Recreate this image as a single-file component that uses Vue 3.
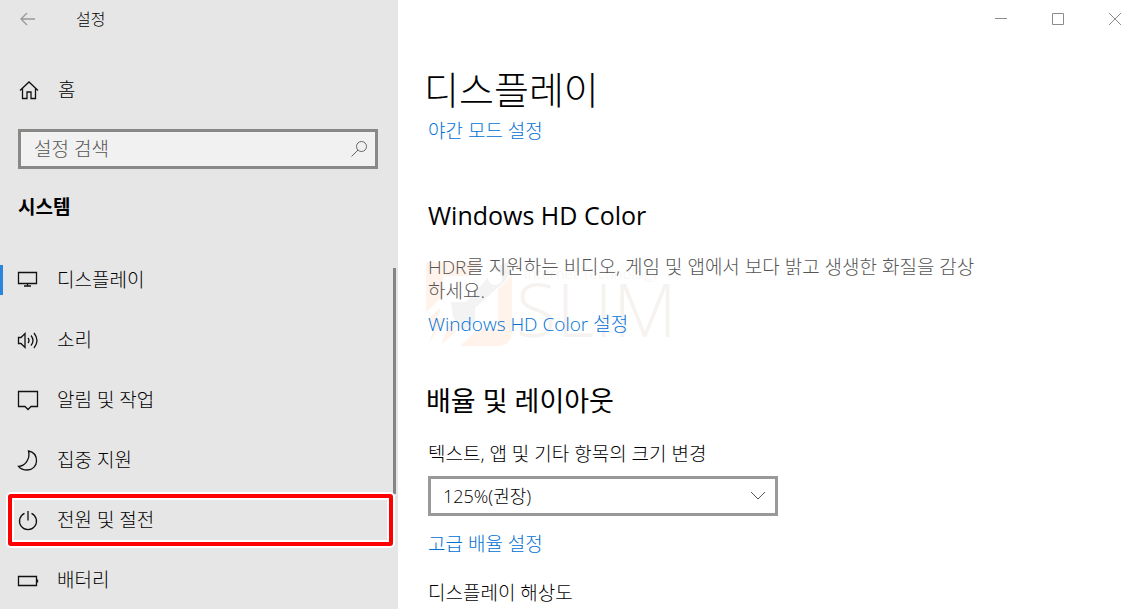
<script setup>
import { ref } from 'vue'

const query = ref('')
const scale = ref('125')
const items = [
  { id: 'display', label: '디스플레이', active: true },
  { id: 'sound', label: '소리' },
  { id: 'alerts', label: '알림 및 작업' },
  { id: 'focus', label: '집중 지원' },
  { id: 'power', label: '전원 및 절전', marked: true },
  { id: 'battery', label: '배터리' },
]
</script>

<template>
  <div class="window">
    <aside class="sidebar">
      <header class="titlebar">
        <button class="back" type="button" aria-label="뒤로">
          <svg width="16" height="14" viewBox="0 0 16 14"><path d="M15 7H1M7 1L1 7l6 6" /></svg>
        </button>
        <span class="app-name">설정</span>
      </header>

      <a class="home" href="#home">
        <svg class="icon" width="20" height="20" viewBox="0 0 20 20">
          <path d="M1 10.500L10 2l9 8.500M3.500 8.500V18.500H8V12h4v6.500h4.500V8.500" />
        </svg>
        <span>홈</span>
      </a>

      <div class="search">
        <input v-model="query" type="text" placeholder="설정 검색" aria-label="설정 검색" />
        <button type="button" aria-label="검색">
          <svg width="18" height="18" viewBox="0 0 18 18">
            <circle cx="11.500" cy="6.500" r="5" /><path d="M8 10L1.500 16.500" />
          </svg>
        </button>
      </div>

      <h2 class="group">시스템</h2>

      <nav class="nav">
        <a
          v-for="item in items"
          :key="item.id"
          :href="'#' + item.id"
          :class="['nav-item', { active: item.active, marked: item.marked }]"
        >
          <svg class="icon" width="22" height="22" viewBox="0 0 22 22">
            <template v-if="item.id === 'display'">
              <path d="M1.500 3.500h18v11h-18zM10.500 14.500v2.500M7 17h7" />
            </template>
            <template v-else-if="item.id === 'sound'">
              <path d="M1.500 8.500H4l4-4v14l-4-4H1.500z" />
              <path d="M11 9q2 2.500 0 5M14 6.500q4 5 0 10M17 4q6 7.500 0 15" />
            </template>
            <template v-else-if="item.id === 'alerts'">
              <path d="M1.500 2.500h19v15H14l-3 3-3-3H1.500z" />
            </template>
            <template v-else-if="item.id === 'focus'">
              <path d="M11.500 2C17 3 19.500 7 19.500 12a9 9 0 0 1-9 9C7 21 3.500 20 1.500 17.300 8 17 13.500 10 11.500 2z" />
            </template>
            <template v-else-if="item.id === 'power'">
              <path d="M11 2v9.500M7.500 4.400a8.500 8.500 0 1 0 7 0" />
            </template>
            <template v-else>
              <path d="M1.500 7.500h18v9h-18zM20.500 10.500v3" />
            </template>
          </svg>
          <span>{{ item.label }}</span>
        </a>
        <div class="scroll-thumb"></div>
      </nav>
    </aside>

    <main class="content">
      <div class="controls">
        <button type="button" aria-label="최소화">
          <svg width="14" height="14" viewBox="0 0 14 14"><path d="M1 6.500h12" /></svg>
        </button>
        <button type="button" aria-label="최대화">
          <svg width="14" height="14" viewBox="0 0 14 14"><path d="M1.500 1.500h11v11h-11z" /></svg>
        </button>
        <button type="button" aria-label="닫기">
          <svg width="14" height="14" viewBox="0 0 14 14"><path d="M1 1l12 12M13 1L1 13" /></svg>
        </button>
      </div>

      <h1>디스플레이</h1>
      <a class="link" href="#night">야간 모드 설정</a>

      <section class="hd">
        <svg class="watermark" width="250" height="100" viewBox="0 0 250 100" aria-hidden="true">
          <g fill="#fff3eb">
            <path d="M0 3h56L42 17H17v20L0 54z" />
            <path d="M72 30l14-14v56q0 15-15 15H34l18-17h20z" />
            <path d="M2 60l13-12-4 12 10-2L3 84l6-16z" />
            <path d="M22 68l10-5-6 9 6-1-17 15z" />
          </g>
          <path fill="#f3f3f3" d="M25 43h15l25-28q9-12 20-12 1 12-8 21L49 49v15L36 72 27 58z" />
          <circle cx="69" cy="19" r="7" fill="#fff" />
          <text class="mark-small" x="98" y="20">Internet Technology</text>
          <text class="mark-large" x="90" y="78">SLIM</text>
        </svg>
        <h2>Windows HD Color</h2>
        <p>HDR를 지원하는 비디오, 게임 및 앱에서 보다 밝고 생생한 화질을 감상하세요.</p>
        <a class="link" href="#hd">Windows HD Color 설정</a>
      </section>

      <section class="layout">
        <h2>배율 및 레이아웃</h2>
        <label for="scale">텍스트, 앱 및 기타 항목의 크기 변경</label>
        <div class="select">
          <select id="scale" v-model="scale">
            <option value="125">125%(권장)</option>
          </select>
          <svg width="16" height="10" viewBox="0 0 16 10"><path d="M1 1l7 7 7-7" /></svg>
        </div>
        <a class="link" href="#advanced">고급 배율 설정</a>
        <p class="resolution">디스플레이 해상도</p>
      </section>
    </main>
  </div>
</template>

<style>
body {
  margin: 0;
}
</style>

<style scoped>
.window {
  display: flex;
  height: 100vh;
  overflow: hidden;
  background: #fff;
  color: #000;
  font-family: "Open Sans", "Noto Sans CJK KR", sans-serif;
  font-size: 19px;
  font-weight: 300;
  line-height: 24px;
}
h1,
h2,
p {
  margin: 0;
  font-weight: 300;
}
a {
  color: inherit;
  text-decoration: none;
}
button {
  display: flex;
  align-items: center;
  justify-content: center;
  padding: 0;
  border: 0;
  background: none;
}
svg {
  flex: none;
  fill: none;
  stroke: #111;
  stroke-width: 1.3;
}
.sidebar {
  flex: none;
  box-sizing: border-box;
  width: 398px;
  background: #e6e6e6;
}
.titlebar {
  display: flex;
  align-items: center;
  height: 38px;
  padding-left: 20px;
  font-size: 16px;
}
.back svg {
  stroke: #999;
}
.app-name {
  margin-left: 40px;
}
.home {
  display: flex;
  align-items: center;
  gap: 19px;
  height: 60px;
  margin-top: 22px;
  padding-left: 19px;
}
.search {
  display: flex;
  box-sizing: border-box;
  height: 40px;
  margin: 9px 20px 0 18px;
  border: 3px solid #888886;
  background: #f1f1f1;
}
.search input {
  flex: 1;
  min-width: 0;
  padding: 0 0 0 13px;
  border: 0;
  background: none;
  font: inherit;
  outline: 0;
}
.search input::placeholder {
  color: #555;
  opacity: 1;
}
.search button {
  width: 32px;
}
.search svg {
  stroke: #666;
  stroke-width: 1;
}
.group {
  margin: 26px 0 31px 18px;
  font-size: 19px;
  font-weight: 700;
  line-height: 24px;
}
.nav {
  position: relative;
}
.nav-item {
  position: relative;
  display: flex;
  align-items: center;
  gap: 18px;
  height: 60px;
  padding-left: 17px;
}
.active::before {
  content: "";
  position: absolute;
  left: 0;
  width: 3px;
  height: 30px;
  background: #2a86dc;
}
.marked::after {
  content: "";
  position: absolute;
  z-index: 2;
  inset: 4px 5px 4px 8px;
  border: 4px solid #f00;
  border-radius: 3px;
  box-shadow: 0 0 0 2px #fff, inset 0 0 0 2px #fff;
}
.scroll-thumb {
  position: absolute;
  top: 18px;
  right: 2px;
  width: 3px;
  height: 226px;
  background: #858585;
}
.content {
  flex: 1;
  min-width: 0;
  padding-left: 30px;
}
.controls {
  display: flex;
  justify-content: flex-end;
  height: 38px;
}
.controls button {
  width: 57px;
}
.controls button:last-child {
  width: 34px;
}
.controls button:nth-child(2) {
  margin-right: 12px;
}
.controls svg {
  stroke: #8c8c8c;
  stroke-width: 1;
}
h1 {
  margin: 25px 0 0 -4px;
  font-size: 38px;
  line-height: 52px;
}
.link {
  display: block;
  width: fit-content;
  margin-top: 4px;
  color: #0071d4;
}
.content h2 {
  font-size: 25px;
  font-weight: 400;
  line-height: 36px;
}
.hd {
  position: relative;
  margin-top: 54px;
}
.hd > :not(.watermark) {
  position: relative;
}
.hd p {
  max-width: 560px;
  margin-top: 22px;
  color: #555;
  word-break: break-all;
}
.hd .link {
  margin-top: 9px;
}
.watermark {
  position: absolute;
  top: 62px;
  left: -2px;
  stroke: none;
}
.watermark text {
  fill: #f6f2f0;
  font-family: "Open Sans", sans-serif;
}
.mark-small {
  font-size: 15px;
}
.mark-large {
  font-size: 74px;
}
.layout {
  margin-top: 47px;
}
.content .layout h2 {
  margin-left: -2px;
  font-size: 27px;
}
.layout label {
  display: block;
  margin-top: 23px;
}
.select {
  display: flex;
  position: relative;
  align-items: center;
  box-sizing: border-box;
  width: 350px;
  height: 40px;
  margin-top: 10px;
  border: 3px solid #999;
}
.select select {
  width: 100%;
  height: 100%;
  padding: 0 40px 0 12px;
  border: 0;
  background: #fff;
  color: #000;
  font: inherit;
  font-size: 18px;
  appearance: none;
}
.select svg {
  position: absolute;
  right: 9px;
  stroke: #555;
  stroke-width: 1;
  pointer-events: none;
}
.layout .link {
  margin-top: 16px;
}
.resolution {
  margin-top: 25px;
}
</style>
